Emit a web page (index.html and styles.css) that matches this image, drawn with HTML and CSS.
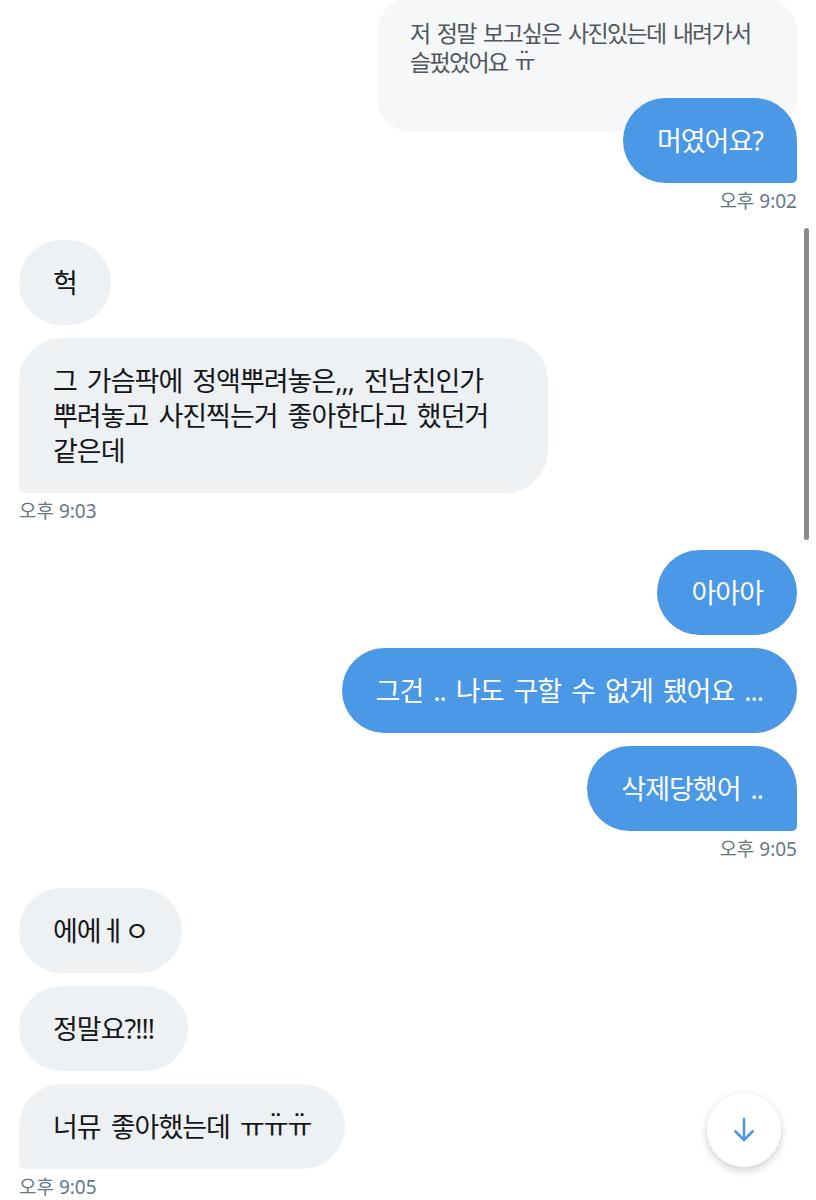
FILE: index.html
```html
<!DOCTYPE html>
<html>
<head>
	<meta charset="utf-8">
	<title>메시지</title>
	<link rel="stylesheet" href="styles.css">
</head>
<body>
	<div class="conversation">
		<div class="group sent">
			<div class="quote">저 정말 보고싶은 사진있는데 내려가서<br>슬펐었어요 <span class="tear">ㅠ<span class="dots">¨</span></span></div>
			<div class="bubble last reply">머였어요?</div>
			<div class="time">오후 9:02</div>
		</div>

		<div class="group received">
			<div class="bubble">헉</div>
			<div class="bubble last wide">그 가슴팍에 정액뿌려놓은,,, 전남친인가 뿌려놓고 사진찍는거 좋아한다고 했던거 같은데</div>
			<div class="time">오후 9:03</div>
		</div>

		<div class="group sent">
			<div class="bubble">아아아</div>
			<div class="bubble">그건 .. 나도 구할 수 없게 됐어요 ...</div>
			<div class="bubble last">삭제당했어 ..</div>
			<div class="time">오후 9:05</div>
		</div>

		<div class="group received">
			<div class="bubble">에에ㅔㅇ</div>
			<div class="bubble">정말요?!!!</div>
			<div class="bubble last">너뮤 좋아했는데 ㅠ<span class="tear">ㅠ<span class="dots">¨</span></span><span class="tear">ㅠ<span class="dots">¨</span></span></div>
			<div class="time">오후 9:05</div>
		</div>
	</div>

	<div class="scrollbar"></div>

	<button class="scroll-down" aria-label="아래로">
		<svg width="30" height="30" viewBox="0 0 24 24" fill="none" stroke="#4a98e6" stroke-width="2" stroke-linecap="round" stroke-linejoin="round">
			<path d="M12 3v17"/>
			<path d="M5 13l7 7 7-7"/>
		</svg>
	</button>
</body>
</html>
```

FILE: styles.css
```css
body {
	margin: 0;
	background-color: #fff;
	font-family: "Noto Sans", "Noto Sans CJK KR", sans-serif;
	color: #14171a;
}

.conversation {
	display: flex;
	flex-direction: column;
	gap: 29px;
	padding: 0 19px;
	margin-top: -2px;
}

.group {
	display: flex;
	flex-direction: column;
	gap: 13px;
}

.sent {
	align-items: flex-end;
}

.received {
	align-items: flex-start;
}

.bubble {
	font-size: 27px;
	letter-spacing: -1px;
	word-spacing: 4px;
	word-break: keep-all;
	line-height: 35px;
	padding: 25px 34px;
	border-radius: 43px;
	box-sizing: border-box;
	max-width: 529px;
}

.sent .bubble {
	background-color: #4a98e6;
	color: #fff;
}

.received .bubble {
	background-color: #eef1f3;
}

.sent .bubble.last {
	border-bottom-right-radius: 5px;
}

.received .bubble.last {
	border-bottom-left-radius: 5px;
}

.wide {
	width: 529px;
}

.quote {
	width: 420px;
	box-sizing: border-box;
	background-color: #f5f7f8;
	color: #50565c;
	font-size: 23px;
	letter-spacing: -1.7px;
	word-spacing: 3px;
	line-height: 29px;
	padding: 21px 33px 55px;
	border-radius: 34px;
}

.reply {
	margin-top: -47px;
}

.tear {
	position: relative;
}

.tear .dots {
	position: absolute;
	left: 0;
	right: 0;
	top: 0.12em;
	line-height: 1;
	text-align: center;
	font-family: "DejaVu Sans", sans-serif;
	letter-spacing: 0;
}

.time {
	font-size: 19px;
	line-height: 20px;
	color: #657786;
	margin-top: -5px;
}

.scrollbar {
	position: absolute;
	left: 804px;
	top: 228px;
	width: 5px;
	height: 312px;
	border-radius: 3px;
	background-color: #8a8a8a;
}

.scroll-down {
	position: absolute;
	left: 707px;
	top: 1093px;
	width: 74px;
	height: 74px;
	border: none;
	border-radius: 50%;
	background-color: #fff;
	box-shadow: 0 3px 8px rgba(0, 0, 0, 0.2);
	display: flex;
	align-items: center;
	justify-content: center;
	padding: 0;
}
```
